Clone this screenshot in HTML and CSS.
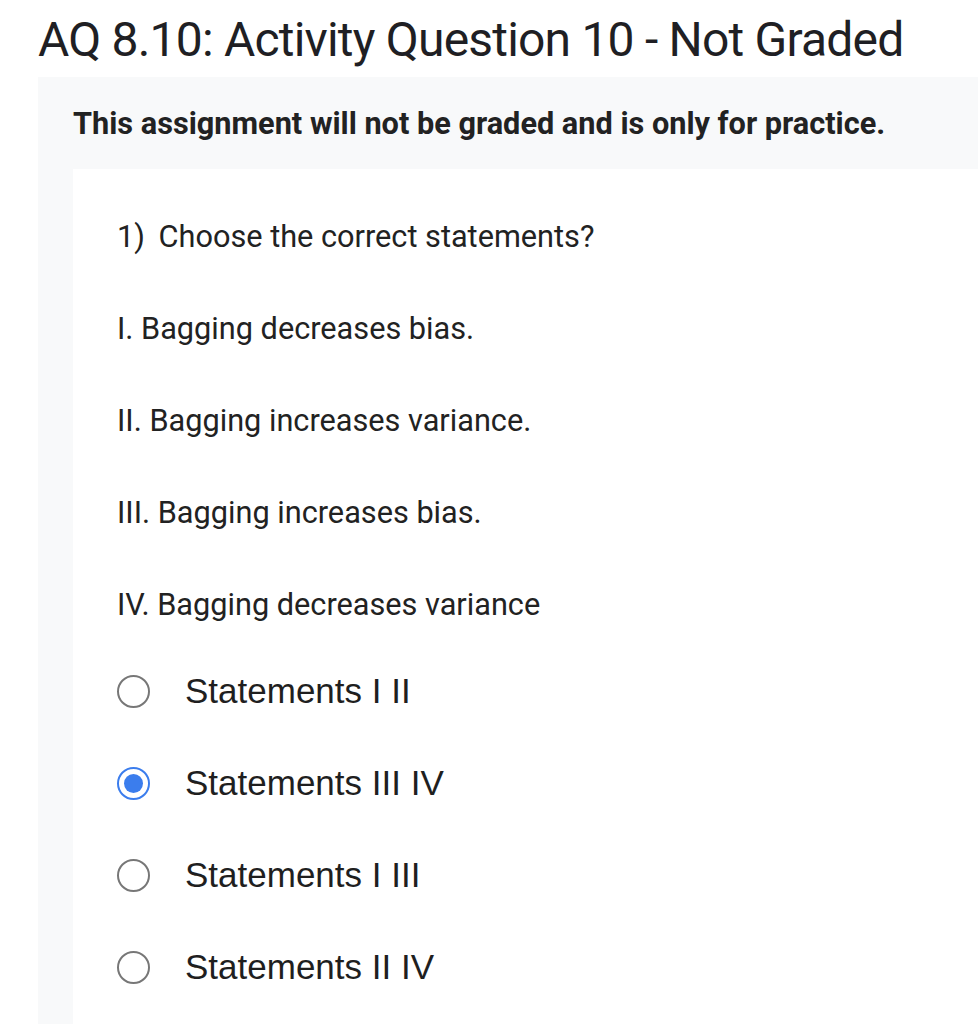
FILE: index.html
```html
<!DOCTYPE html>
<html>
<head>
<meta charset="utf-8">
<link rel="stylesheet" href="styles.css">
</head>
<body>
<h1 class="title">AQ 8.10: Activity Question 10 - Not Graded</h1>
<section class="panel">
  <p class="notice">This assignment will not be graded and is only for practice.</p>
  <div class="card">
    <div class="question">
      <p class="qline"><span class="qnum">1)</span> Choose the correct statements?</p>
      <p class="qline">I. Bagging decreases bias.</p>
      <p class="qline">II. Bagging increases variance.</p>
      <p class="qline">III. Bagging increases bias.</p>
      <p class="qline">IV. Bagging decreases variance</p>
    </div>
    <div class="options">
      <label class="option"><span class="radio"></span><span class="opt-text">Statements I II</span></label>
      <label class="option"><span class="radio checked"></span><span class="opt-text">Statements III IV</span></label>
      <label class="option"><span class="radio"></span><span class="opt-text">Statements I III</span></label>
      <label class="option"><span class="radio"></span><span class="opt-text">Statements II IV</span></label>
    </div>
  </div>
</section>
</body>
</html>
```
FILE: styles.css
```css
html, body {
  margin: 0;
  padding: 0;
  background: #ffffff;
}
body {
  font-family: Roboto, "Liberation Sans", sans-serif;
  color: #202124;
  overflow: hidden;
  height: 1024px;
  display: flex;
  flex-direction: column;
}
.title {
  margin: 12px 0 9px 38px;
  font-size: 48px;
  font-weight: 400;
  line-height: 56px;
  letter-spacing: -0.8px;
  color: #1f1f24;
  white-space: nowrap;
  flex: none;
}
.panel {
  margin-left: 38px;
  background: #f8f9fa;
  padding: 28px 0 0 35px;
  flex: 1;
  min-height: 0;
  display: flex;
  flex-direction: column;
}
.notice {
  margin: 0 0 27px 0;
  font-size: 30.7px;
  font-weight: 700;
  line-height: 37px;
  color: #222222;
  white-space: nowrap;
}
.card {
  background: #ffffff;
  padding: 21px 0 0 44px;
  flex: 1;
  min-height: 0;
  overflow: hidden;
}
.question {
  display: flex;
  flex-direction: column;
}
.qline {
  margin: 0;
  height: 92px;
  display: flex;
  align-items: center;
  font-size: 30.7px;
  color: #222222;
  white-space: pre;
}
.qnum {
  margin-right: 6px;
}
.options {
  display: flex;
  flex-direction: column;
  margin-top: -5px;
}
.option {
  height: 92px;
  display: flex;
  align-items: center;
  gap: 35px;
}
.radio {
  width: 29px;
  height: 29px;
  border: 2px solid #777777;
  border-radius: 50%;
  box-sizing: content-box;
  flex: none;
  position: relative;
}
.radio.checked {
  border-color: #3b7ded;
}
.radio.checked::after {
  content: "";
  position: absolute;
  left: 5px;
  top: 5px;
  width: 19px;
  height: 19px;
  border-radius: 50%;
  background: #3b7ded;
}
.opt-text {
  font-family: "Liberation Sans", Arial, sans-serif;
  font-size: 35px;
  color: #1f1f1f;
  white-space: nowrap;
}
```
